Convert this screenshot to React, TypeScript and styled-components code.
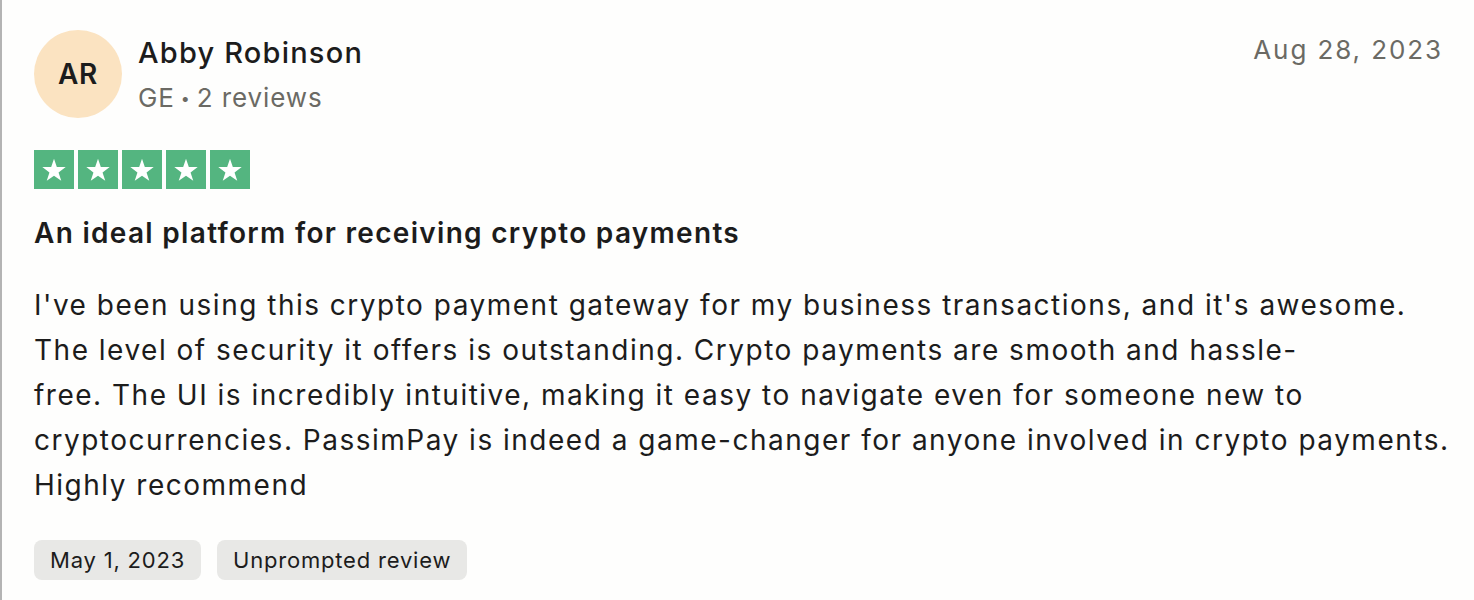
import React from "react";
import styled, { createGlobalStyle } from "styled-components";

const GlobalStyle = createGlobalStyle`
  html, body {
    margin: 0;
    padding: 0;
    background: #ffffff;
  }
  body {
    font-family: Inter, "Noto Sans", "Liberation Sans", sans-serif;
    color: #1c1c1c;
  }
`;

const Card = styled.article`
  box-sizing: border-box;
  width: 1474px;
  height: 600px;
  border-left: 2px solid #b4b4b4;
  background: #fefefd;
  padding: 30px 32px 0 32px;
`;

const Header = styled.header`
  display: flex;
  align-items: flex-start;
  justify-content: space-between;
`;

const Author = styled.div`
  display: flex;
  align-items: center;
  gap: 16px;
`;

const Avatar = styled.div`
  width: 88px;
  height: 88px;
  border-radius: 50%;
  background: #fbe3c1;
  display: flex;
  align-items: center;
  justify-content: center;
  font-size: 28px;
  font-weight: 600;
  letter-spacing: 0.8px;
  color: #1c1c1c;
`;

const AuthorInfo = styled.div`
  display: flex;
  flex-direction: column;
  gap: 8px;
`;

const Name = styled.div`
  font-size: 29px;
  font-weight: 500;
  line-height: 40px;
  letter-spacing: 1.2px;
  color: #1c1c1c;
`;

const Meta = styled.div`
  font-size: 26px;
  line-height: 34px;
  letter-spacing: 0.9px;
  color: #6b6a64;
`;

const Dot = styled.span`
  font-size: 16px;
  vertical-align: 3px;
  margin: 0 6px;
`;

const DateText = styled.time`
  font-size: 26px;
  line-height: 40px;
  letter-spacing: 1.9px;
  color: #6b6a64;
  margin-right: -1px;
`;

const Stars = styled.div`
  display: flex;
  gap: 4px;
  margin-top: 32px;
`;

const StarBox = styled.div`
  width: 40px;
  height: 39px;
  background: #54b580;
  display: flex;
  align-items: center;
  justify-content: center;
`;

const Title = styled.h2`
  margin: 26px 0 0;
  font-size: 28px;
  font-weight: 600;
  line-height: 36px;
  letter-spacing: 1.3px;
  color: #1c1c1c;
`;

const Body = styled.p`
  margin: 32px 0 0;
  width: 1432px;
  font-size: 28px;
  line-height: 45px;
  letter-spacing: 1.5px;
  color: #1c1c1c;
`;

const Tags = styled.div`
  display: flex;
  gap: 16px;
  margin-top: 32px;
`;

const Tag = styled.span`
  display: inline-flex;
  align-items: center;
  height: 40px;
  padding: 0 16px;
  border-radius: 8px;
  background: #e8e8e6;
  font-size: 22px;
  letter-spacing: 0.8px;
  color: #1c1c1c;
`;

const Star = () => (
  <svg width="26" height="26" viewBox="0 0 24 24">
    <polygon
      fill="#ffffff"
      points="12,1.5 14.6,9.3 22.8,9.3 16.2,14.2 18.7,22 12,17.2 5.3,22 7.8,14.2 1.2,9.3 9.4,9.3"
    />
  </svg>
);

export default function App() {
  return (
    <>
      <GlobalStyle />
      <Card>
        <Header>
          <Author>
            <Avatar>AR</Avatar>
            <AuthorInfo>
              <Name>Abby Robinson</Name>
              <Meta>
                GE<Dot>•</Dot>2 reviews
              </Meta>
            </AuthorInfo>
          </Author>
          <DateText>Aug 28, 2023</DateText>
        </Header>
        <Stars>
          {[0, 1, 2, 3, 4].map((i) => (
            <StarBox key={i}>
              <Star />
            </StarBox>
          ))}
        </Stars>
        <Title>An ideal platform for receiving crypto payments</Title>
        <Body>
          I've been using this crypto payment gateway for my business transactions, and it's
          awesome.
          <br />
          The level of security it offers is outstanding. Crypto payments are smooth and hassle-
          <br />
          free. The UI is incredibly intuitive, making it easy to navigate even for someone new to
          <br />
          cryptocurrencies. PassimPay is indeed a game-changer for anyone involved in crypto
          payments.
          <br />
          Highly recommend
        </Body>
        <Tags>
          <Tag>May 1, 2023</Tag>
          <Tag>Unprompted review</Tag>
        </Tags>
      </Card>
    </>
  );
}
